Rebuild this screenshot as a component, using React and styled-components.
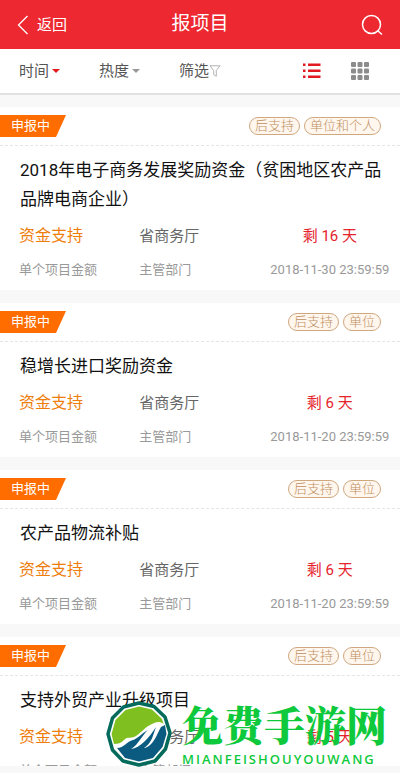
import React from 'react';
import styled, { createGlobalStyle } from 'styled-components';

const GlobalStyle = createGlobalStyle`
	* {
		box-sizing: border-box;
	}

	body {
		margin: 0;
		background: #f8f8f8;
		color: #555;
		font-family: Roboto, 'Noto Sans CJK SC', sans-serif;
	}

	button {
		border: 0;
		padding: 0;
		background: none;
		color: inherit;
		font: inherit;
		cursor: pointer;
	}
`;

const Page = styled.div`
	position: relative;
	display: flex;
	flex-direction: column;
	height: 100vh;
	overflow: hidden;
`;

const Header = styled.header`
	display: grid;
	grid-template-columns: 1fr auto 1fr;
	align-items: center;
	flex: none;
	height: 49px;
	padding: 0 17px;
	background: #ed2830;
	color: #fff;
`;

const BackButton = styled.button`
	display: flex;
	align-items: center;
	justify-self: start;
	gap: 8px;
	font-size: 15px;
	line-height: 24px;
`;

const HeaderTitle = styled.h1`
	margin: 0;
	padding-bottom: 2px;
	font-size: 19px;
	font-weight: 400;
	line-height: 28px;
`;

const SearchButton = styled.button`
	display: flex;
	justify-self: end;
`;

const FilterBar = styled.nav`
	display: grid;
	grid-template-columns: 80fr 80fr 124fr 48fr 49fr;
	align-items: center;
	flex: none;
	height: 46px;
	padding: 0 0 1px 19px;
	border-bottom: 2px solid #e2e2e2;
	background: #fff;
`;

const FilterButton = styled.button`
	display: flex;
	align-items: center;
	font-size: 15px;
	line-height: 24px;
`;

const Caret = styled.span`
	margin-left: 3px;
	border: 4px solid transparent;
	border-top-color: ${(props) => (props.$active ? '#e01b22' : '#999')};
	border-bottom-width: 0;
`;

const ViewButton = styled.button`
	display: flex;
	color: ${(props) => (props.$active ? '#e01b22' : '#8c8c8c')};
`;

const List = styled.main`
	flex: 1;
	min-height: 0;
	padding-top: 12px;
	overflow: hidden;
`;

const Card = styled.article`
	margin-bottom: 13px;
	padding-bottom: 10px;
	background: #fff;
`;

const CardHead = styled.div`
	display: flex;
	align-items: center;
	justify-content: space-between;
	height: 39px;
	padding-right: 19px;
	border-bottom: 1px dashed #e8e4e0;
`;

const Status = styled.span`
	width: 66px;
	padding-left: 11px;
	background: #ff6c00;
	clip-path: polygon(0 0, 100% 0, 56px 100%, 0 100%);
	color: #fff;
	font-size: 13px;
	line-height: 22px;
`;

const Tags = styled.div`
	display: flex;
	gap: 4px;
`;

const Tag = styled.span`
	padding: 0 5px;
	border: 1px solid #d0a880;
	border-radius: 9px;
	background: #fff6ee;
	color: #c09060;
	font-size: 13px;
	font-weight: 300;
	line-height: 16px;
`;

const CardTitle = styled.h2`
	margin: 0;
	padding: 10px 16px 0 20px;
	color: #111;
	font-size: 17px;
	font-weight: 400;
	line-height: 29px;
`;

const Details = styled.dl`
	display: grid;
	grid-template-columns: 6fr 6fr 7fr;
	margin: 0;
	padding: 10px 0 0 19px;
`;

const Detail = styled.div`
	display: flex;
	flex-direction: column-reverse;
	gap: 12px;
	text-align: ${(props) => props.$align || 'left'};
`;

const Label = styled.dt`
	color: #999;
	font-size: 13px;
	line-height: 20px;
	white-space: nowrap;
`;

const Value = styled.dd`
	margin: 0;
	color: ${(props) => props.$color || '#666'};
	font-size: ${(props) => (props.$large ? 16 : 15)}px;
	line-height: 24px;
`;

const BottomEdge = styled.footer`
	flex: none;
	height: 7px;
	background: #f8f8f8;
`;

const Watermark = styled.div`
	position: absolute;
	right: 13px;
	bottom: 6px;
	display: flex;
	align-items: flex-end;
	gap: 10px;
	pointer-events: none;
`;

const WatermarkText = styled.div`
	color: #0fc93c;
	font-weight: 900;
`;

const WatermarkName = styled.div`
	font-family: 'Noto Serif CJK SC', 'Noto Sans CJK SC', serif;
	font-size: 41px;
	line-height: 54px;
`;

const WatermarkLatin = styled.div`
	font-family: 'Open Sans', sans-serif;
	font-size: 13px;
	font-weight: 600;
	letter-spacing: 2px;
	line-height: 16px;
`;

const projects = [
	{
		title: '2018年电子商务发展奖励资金（贫困地区农产品品牌电商企业）',
		tags: ['后支持', '单位和个人'],
		days: 16,
		deadline: '2018-11-30 23:59:59',
	},
	{
		title: '稳增长进口奖励资金',
		tags: ['后支持', '单位'],
		days: 6,
		deadline: '2018-11-20 23:59:59',
	},
	{
		title: '农产品物流补贴',
		tags: ['后支持', '单位'],
		days: 6,
		deadline: '2018-11-20 23:59:59',
	},
	{
		title: '支持外贸产业升级项目',
		tags: ['后支持', '单位'],
		days: 5,
		deadline: '2018-11-20 23:59:59',
	},
];

function BackIcon() {
	return (
		<svg width="12" height="20" viewBox="0 0 12 20" fill="none" stroke="currentColor" strokeWidth="1.3">
			<path d="M10.5 1 1.5 10l9 9" />
		</svg>
	);
}

function SearchIcon() {
	return (
		<svg width="22" height="22" viewBox="0 0 22 22" fill="none" stroke="currentColor" strokeWidth="1.5">
			<circle cx="10.5" cy="10.5" r="9" />
			<path d="m16.5 16.5 4.5 4" />
		</svg>
	);
}

function FunnelIcon() {
	return (
		<svg width="12" height="12" viewBox="0 0 12 12" fill="none" stroke="#aaa" strokeWidth="0.9">
			<path d="M1 .8h10L7.3 5.5v5.7L4.7 9.6V5.5Z" />
		</svg>
	);
}

function ListIcon() {
	return (
		<svg width="18" height="16" viewBox="0 0 18 16" fill="currentColor">
			<path d="M0 .5h2.5v2.5H0zM5 .5h12.5v2.5H5zM0 6.500h2.500v2.500H0zM5 6.500h12.500v2.500H5zM0 12.500h2.500v2.500H0zM5 12.500h12.500v2.500H5z" />
		</svg>
	);
}

function GridIcon() {
	return (
		<svg width="18" height="18" viewBox="0 0 18 18" fill="currentColor">
			{[0, 6.5, 13].map((y) =>
				[0, 6.5, 13].map((x) => <rect key={`${x}-${y}`} x={x} y={y} width="5" height="5" rx="1" />)
			)}
		</svg>
	);
}

function WatermarkLogo() {
	return (
		<svg width="66" height="66" viewBox="0 0 66 66">
			<path
				d="M33 2 48 5.5 59 16 64 32 59.5 48 49 60 33 64 17 60 6.5 49 2 33 6.5 17 17.5 6Z"
				fill="#fff"
				stroke="#046b5c"
				strokeWidth="3.5"
				strokeLinejoin="round"
			/>
			<path
				d="M33 5.5 46 8.5 56 18 57.5 23C54 20 50 21 46 23 39 26 36 31 30 35 26 38 22 35 18 39 15 42 12 43 8 43L5.5 33 9.5 19 19.5 9Z"
				fill="#80bf20"
			/>
			<path
				d="M11 47C18 47 21 40 27 39 31 38 35 33 42 29 36 34 33 43 25 48 34 47 43 37 50 26 47 34 46 42 38 47 47 46 51 33 55 26L59 24 60.5 33 56.5 46 47 57 33 60.5 19 57Z"
				fill="#0b5b80"
			/>
		</svg>
	);
}

function ProjectCard({ project }) {
	return (
		<Card>
			<CardHead>
				<Status>申报中</Status>
				<Tags>
					{project.tags.map((tag) => (
						<Tag key={tag}>{tag}</Tag>
					))}
				</Tags>
			</CardHead>
			<CardTitle>{project.title}</CardTitle>
			<Details>
				<Detail>
					<Label>单个项目金额</Label>
					<Value $color="#ee7d0b" $large>
						资金支持
					</Value>
				</Detail>
				<Detail>
					<Label>主管部门</Label>
					<Value>省商务厅</Value>
				</Detail>
				<Detail $align="center">
					<Label>{project.deadline}</Label>
					<Value $color="#e5232b">剩 {project.days} 天</Value>
				</Detail>
			</Details>
		</Card>
	);
}

export default function App() {
	return (
		<>
			<GlobalStyle />
			<Page>
				<Header>
					<BackButton>
						<BackIcon />
						返回
					</BackButton>
					<HeaderTitle>报项目</HeaderTitle>
					<SearchButton aria-label="搜索">
						<SearchIcon />
					</SearchButton>
				</Header>
				<FilterBar>
					<FilterButton>
						时间
						<Caret $active />
					</FilterButton>
					<FilterButton>
						热度
						<Caret />
					</FilterButton>
					<FilterButton>
						筛选
						<FunnelIcon />
					</FilterButton>
					<ViewButton $active aria-label="列表">
						<ListIcon />
					</ViewButton>
					<ViewButton aria-label="网格">
						<GridIcon />
					</ViewButton>
				</FilterBar>
				<List>
					{projects.map((project) => (
						<ProjectCard key={project.title} project={project} />
					))}
				</List>
				<BottomEdge />
				<Watermark>
					<WatermarkLogo />
					<WatermarkText>
						<WatermarkName>免费手游网</WatermarkName>
						<WatermarkLatin>MIANFEISHOUYOUWANG</WatermarkLatin>
					</WatermarkText>
				</Watermark>
			</Page>
		</>
	);
}
